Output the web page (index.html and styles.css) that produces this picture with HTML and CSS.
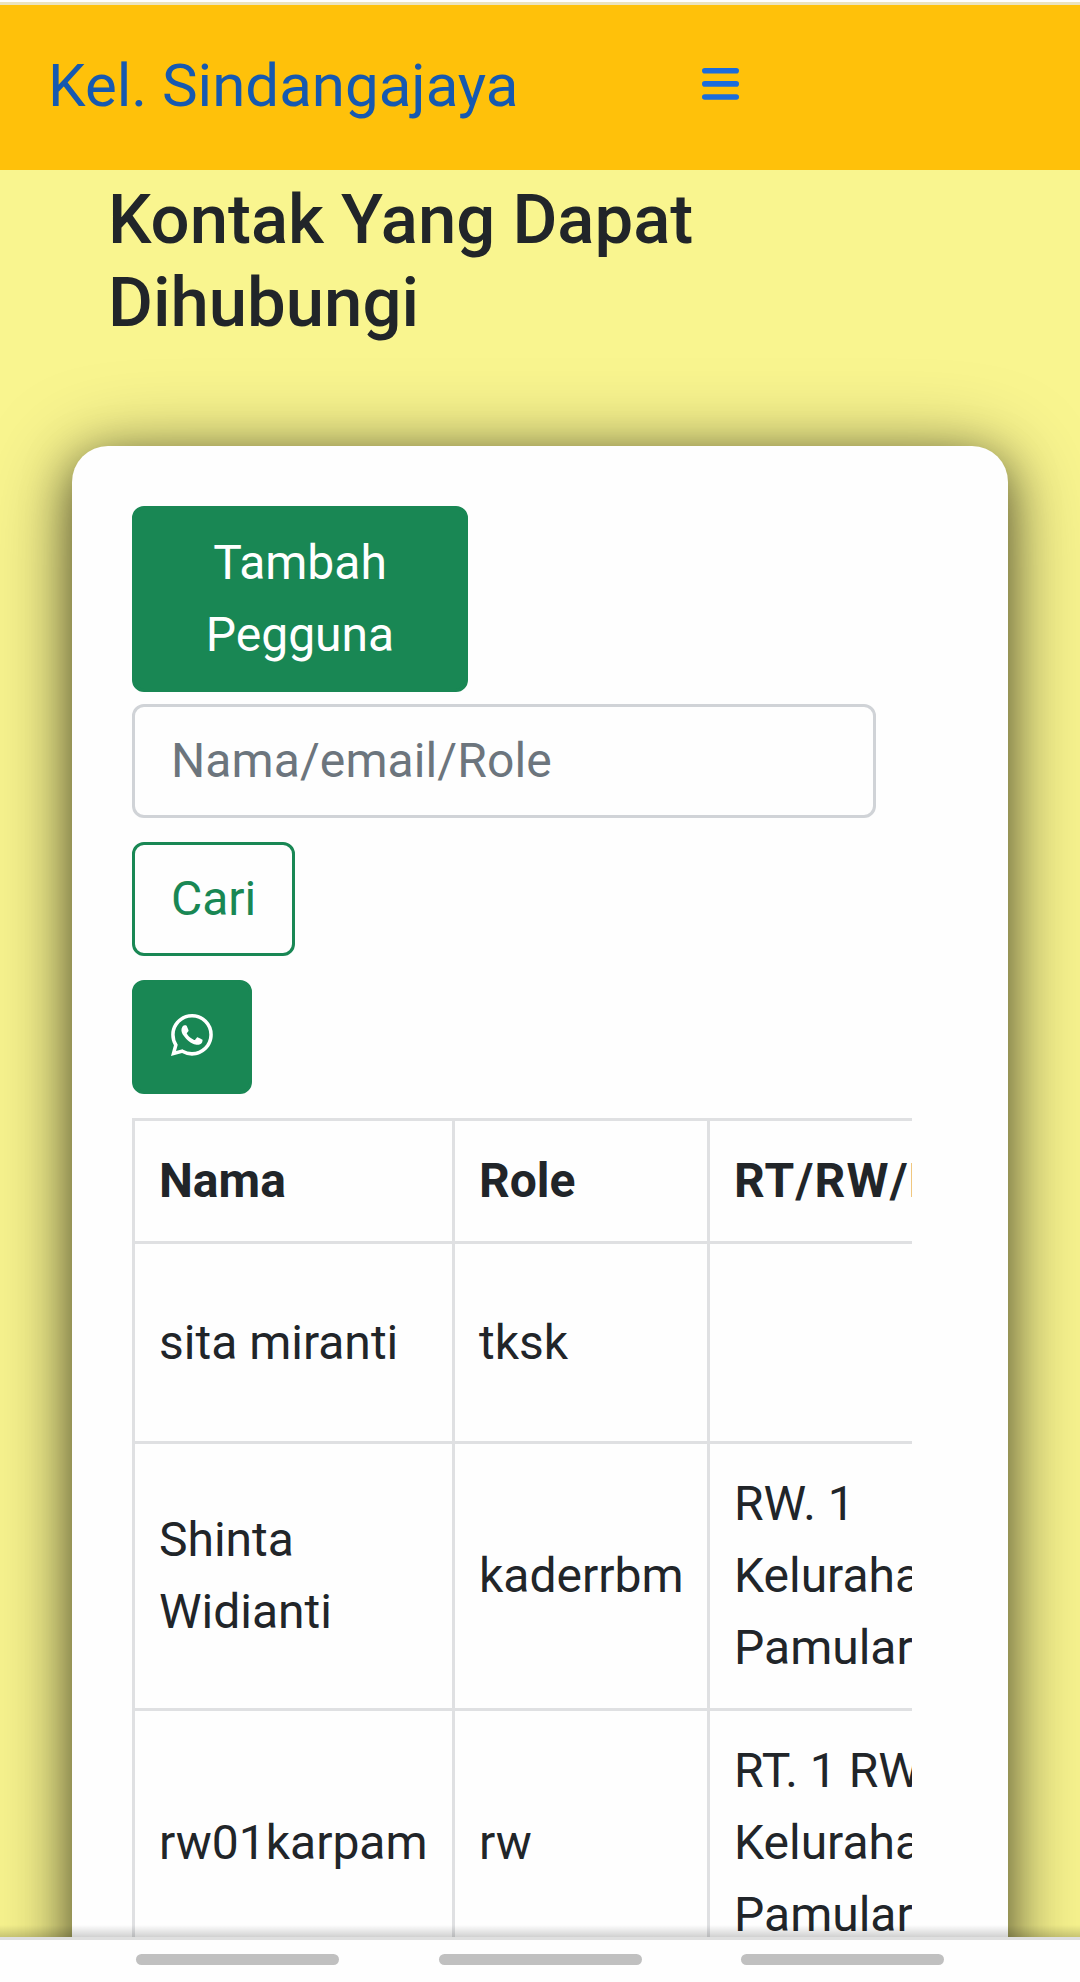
FILE: index.html
```html
<!DOCTYPE html>
<html lang="id">
<head>
    <meta charset="utf-8">
    <title>Kel. Sindangajaya</title>
    <link rel="stylesheet" href="styles.css">
</head>
<body>
    <div class="page">
        <nav class="navbar">
            <a class="navbar-brand" href="#">Kel. Sindangajaya</a>
            <svg class="menu-icon" viewBox="0 0 37 32" fill="currentColor">
                <rect x="0" y="0" width="37" height="5.6" rx="2.8"/>
                <rect x="0" y="13.1" width="37" height="5.6" rx="2.8"/>
                <rect x="0" y="26.2" width="37" height="5.6" rx="2.8"/>
            </svg>
        </nav>

        <h3 class="title">Kontak Yang Dapat Dihubungi</h3>

        <div class="card">
            <a class="btn btn-success btn-add" href="#">Tambah Pegguna</a>
            <input class="form-control" type="text" placeholder="Nama/email/Role">
            <button class="btn btn-outline">Cari</button>
            <a class="btn btn-success btn-wa" href="#">
                <svg class="wa-icon" viewBox="0 0 16 16" fill="currentColor">
                    <path d="M13.601 2.326A7.854 7.854 0 0 0 7.994 0C3.627 0 .068 3.558.064 7.926c0 1.399.366 2.76 1.057 3.965L0 16l4.204-1.102a7.933 7.933 0 0 0 3.79.965h.004c4.368 0 7.926-3.558 7.93-7.93A7.898 7.898 0 0 0 13.6 2.326zM7.994 14.521a6.573 6.573 0 0 1-3.356-.92l-.24-.144-2.494.654.666-2.433-.156-.251a6.56 6.56 0 0 1-1.007-3.505c0-3.626 2.957-6.584 6.591-6.584a6.56 6.56 0 0 1 4.66 1.931 6.557 6.557 0 0 1 1.928 4.66c-.004 3.639-2.961 6.592-6.592 6.592zm3.615-4.934c-.197-.099-1.17-.578-1.353-.646-.182-.065-.315-.099-.445.099-.133.197-.513.646-.627.775-.114.133-.232.148-.43.05-.197-.1-.836-.308-1.592-.985-.59-.525-.985-1.175-1.103-1.372-.114-.198-.011-.304.088-.403.087-.088.197-.232.296-.346.1-.114.133-.198.198-.33.065-.134.034-.248-.015-.347-.05-.099-.445-1.076-.612-1.47-.16-.389-.323-.335-.445-.34-.114-.007-.247-.007-.38-.007a.729.729 0 0 0-.529.247c-.182.198-.691.677-.691 1.654 0 .977.71 1.916.81 2.049.098.133 1.394 2.132 3.383 2.992.47.205.84.326 1.129.418.475.152.904.129 1.246.08.38-.058 1.171-.48 1.338-.943.164-.464.164-.86.114-.943-.049-.084-.182-.133-.38-.232z"/>
                </svg>
            </a>

            <div class="table-responsive">
                <table class="table">
                    <tr>
                        <th class="col-nama">Nama</th>
                        <th class="col-role">Role</th>
                        <th class="col-rt">RT/RW/Kel</th>
                    </tr>
                    <tr class="row-tall">
                        <td>sita miranti</td>
                        <td>tksk</td>
                        <td></td>
                    </tr>
                    <tr>
                        <td>Shinta<br>Widianti</td>
                        <td>kaderrbm</td>
                        <td>RW. 1<br>Kelurahan<br>Pamularsih</td>
                    </tr>
                    <tr>
                        <td>rw01karpam</td>
                        <td>rw</td>
                        <td>RT. 1 RW. 1<br>Kelurahan<br>Pamularsih</td>
                    </tr>
                </table>
            </div>
        </div>
    </div>

    <div class="bottom-bar">
        <span></span>
        <span></span>
        <span></span>
    </div>
</body>
</html>
```

FILE: styles.css
```css
* {
    box-sizing: border-box;
}
body {
    margin: 0;
    height: 1982px;
    display: flex;
    flex-direction: column;
    overflow: hidden;
    font-family: Roboto, sans-serif;
    font-size: 48px;
    line-height: 72px;
    color: #212529;
    background-color: #fefefe;
}
a {
    text-decoration: none;
}
.page {
    position: relative;
    height: 1937px;
    flex: none;
    overflow: hidden;
    border-top: 2px solid #fefefe;
    background-color: #f9f58f;
}
/* shade above the bottom bar */
.page::after {
    content: "";
    position: absolute;
    left: 0;
    right: 0;
    bottom: 0;
    height: 12px;
    background: linear-gradient(rgba(0, 0, 0, 0), rgba(0, 0, 0, 0.18));
}
.navbar {
    position: relative;
    z-index: 1;
    display: flex;
    align-items: flex-start;
    height: 168px;
    padding: 36px 48px 0 48px;
    border-top: 3px solid #ebe3be;
    background-color: #ffc10a;
}
.navbar-brand {
    width: 654px;
    font-size: 60px;
    line-height: 90px;
    color: #1659b0;
}
.menu-icon {
    width: 37px;
    height: 32px;
    margin-top: 27px;
    color: #1b6cdc;
}
.title {
    width: 700px;
    margin: 9px 0 0 108px;
    font-size: 68.88px;
    font-weight: 500;
    line-height: 82.66px;
}
.card {
    display: flex;
    flex-direction: column;
    align-items: flex-start;
    width: 936px;
    height: 1700px;
    margin: 102px auto 0;
    padding: 60px;
    border-radius: 36px;
    background-color: #fefefe;
    box-shadow: 0 12px 45px rgba(0, 0, 0, 0.5), 0 12px 90px rgba(0, 0, 0, 0.4);
}
.btn {
    flex: none;
    padding: 18px 36px;
    border: 3px solid #198754;
    border-radius: 12px;
    font-family: inherit;
    font-size: 48px;
    line-height: 72px;
    text-align: center;
}
.btn-success {
    color: #fff;
    background-color: #198754;
}
.btn-add {
    width: 336px;
    margin-bottom: 12px;
}
.form-control {
    flex: none;
    width: 744px;
    height: 114px;
    margin-bottom: 24px;
    padding: 17px 36px 19px;
    border: 3px solid #d0d3d7;
    border-radius: 12px;
    font-family: inherit;
    font-size: 48px;
    letter-spacing: 0.1px;
    background-color: #fefefe;
}
.form-control::placeholder {
    color: #6c757d;
    opacity: 1;
}
.btn-outline {
    width: 163px;
    height: 114px;
    margin-bottom: 24px;
    color: #198754;
    background-color: #fefefe;
}
.btn-wa {
    display: flex;
    width: 120px;
    height: 114px;
    margin-bottom: 24px;
    padding: 31px 36px;
}
.wa-icon {
    width: 42px;
    height: 42px;
}
.table-responsive {
    flex: none;
    width: 780px;
    overflow: hidden;
}
.table {
    width: 900px;
    table-layout: fixed;
    border-spacing: 0;
    border-top: 3px solid #dfe0e2;
    border-left: 3px solid #dfe0e2;
}
.table th,
.table td {
    padding: 24px 0 24px 24px;
    border-right: 3px solid #dfe0e2;
    border-bottom: 3px solid #dfe0e2;
    text-align: left;
    vertical-align: middle;
    white-space: nowrap;
}
.col-nama {
    width: 320px;
}
.col-role {
    width: 255px;
}
.col-rt {
    letter-spacing: 1.2px;
}
.row-tall {
    height: 200px;
}
.bottom-bar {
    display: flex;
    justify-content: space-between;
    height: 45px;
    padding: 14px 136px 0;
    border-top: 3px solid #dfdfdf;
}
.bottom-bar span {
    width: 203px;
    height: 11px;
    border-radius: 6px;
    background-color: #c0c0c0;
}
```
